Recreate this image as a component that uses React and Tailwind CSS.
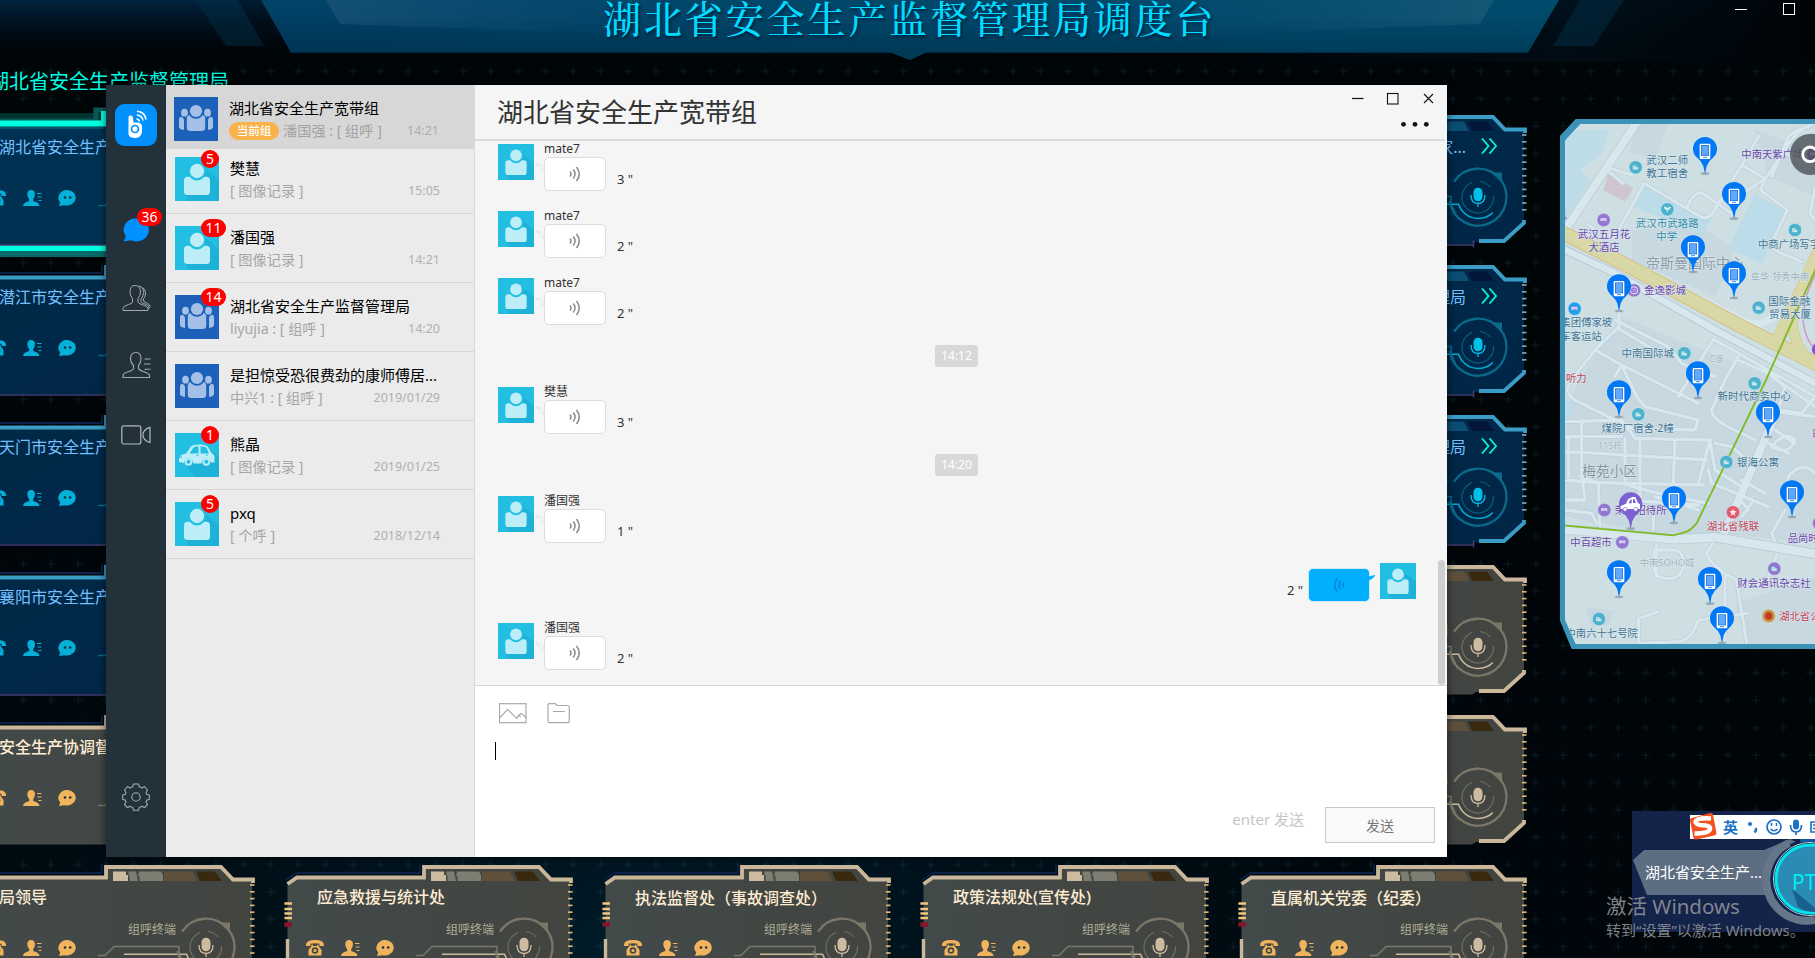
import React from 'react';

const CJK = "font-['Noto_Sans','Noto_Sans_CJK_SC',sans-serif]";

/* ---------- avatars ---------- */

function PersonAvatar({ className }) {
  return (
    <svg viewBox="0 0 44 44" className={className}>
      <rect width="44" height="44" fill="#22bfe3" />
      <path d="M28 10L44 23V44H14L10 38Z" fill="#1fb2d9" />
      <rect x="9" y="19.800" width="26" height="18.200" rx="3.500" fill="#bdedf7" />
      <ellipse cx="22" cy="14" rx="9" ry="9.500" fill="#22bfe3" />
      <ellipse cx="22" cy="14" rx="7.100" ry="7.200" fill="#bdedf7" />
    </svg>
  );
}

function GroupAvatar({ className }) {
  return (
    <svg viewBox="0 0 44 44" className={className}>
      <rect width="44" height="44" fill="#1c60b9" />
      <g fill="#a4c0e6">
        <ellipse cx="10.500" cy="15.700" rx="3.400" ry="3.900" />
        <ellipse cx="33.500" cy="15.700" rx="3.400" ry="3.900" />
        <path d="M5 23Q5 19.800 7.500 19.800Q10 21 10 23V33Q5 32.500 5 29.500Z" />
        <path d="M39 23Q39 19.800 36.500 19.800Q34 21 34 23V33Q39 32.500 39 29.500Z" />
        <rect x="12.800" y="18" width="18.400" height="16" rx="3.500" />
        <circle cx="22" cy="14" r="7.800" fill="#1c60b9" />
        <circle cx="22" cy="14" r="6.100" />
      </g>
    </svg>
  );
}

function CarAvatar({ className }) {
  return (
    <svg viewBox="0 0 44 44" className={className}>
      <rect width="44" height="44" fill="#22bfe3" />
      <path d="M36 17L44 24V44H20L9 30Z" fill="#1fb2d9" />
      <path d="M4 29V26Q4 21.500 11 20.500L16 13.500Q18 11.500 24 11.500Q31 11.500 33 14L36.500 20Q39.500 21 39.500 25V29.500H36Q34.500 25 31 25Q27.500 25 26.500 30.500H18.500Q17 25 13.500 25Q10 25 9 30Z" fill="#bdedf7" />
      <path d="M14.500 20.500L18.500 14.500Q20 13.300 23.500 13.300V20.500ZM25.500 13.300Q30 13.300 31.500 15L34 20.500H25.500Z" fill="#22bfe3" />
      <circle cx="13.500" cy="28.800" r="3.900" fill="#bdedf7" />
      <circle cx="31.300" cy="28.800" r="3.900" fill="#bdedf7" />
      <circle cx="13.500" cy="28.800" r="2" fill="#22bfe3" />
      <circle cx="31.300" cy="28.800" r="2" fill="#22bfe3" />
      <path d="M21.500 22.200h2M31 22.200h2M4 25l3-1.500" stroke="#22bfe3" strokeWidth="1" />
    </svg>
  );
}

/* ---------- dashboard ---------- */

const TONES = {
  gold: { line: '#cbb89b', body: 'url(#goldBody)', ring: '#7b7768', icon: '#f0b45c', mic: '#cdbb9f', tick: '#d9b679', b1: '#cdbb9f', b2: '#7d7d72', b3: '#5f503c', b4: '#38290f', arc: '#cbb79a' },
  blue: { line: '#3b9cc6', body: 'url(#blueBody)', ring: '#096a8a', icon: '#04b0d8', mic: '#00bfe6', tick: '#8ea0ab', b1: '#3b9cc6', b2: '#1a6389', b3: '#0b4e74', b4: '#03163a', arc: '#00a9cf' },
};

function CardFrame({ tone, selected }) {
  const t = TONES[tone];
  const ticks = Array.from({ length: 12 }, (_, i) => 20 + i * 6.8);
  return (
    <svg viewBox="0 0 286 150" className="absolute inset-0 h-[150px] w-[286px] overflow-visible" fill="none">
      <path d="M1.500 19L11 12H138V1.500H253L265 14H284V106L263 127H236L232 129.500H1.500Z" fill={selected ? '#003152' : t.body} />
      <path d="M0 15L11 8H134V0" stroke="#0c2048" strokeWidth="1.800" />
      {selected ? (
        <g>
          <rect x="0" y="-2" width="135" height="16" fill="#00ffe0" opacity="0.18" />
          <path d="M0 6H128V-5H138" stroke="#075a58" strokeWidth="5" />
          <path d="M0 8.500H136V-1H140" stroke="#00ffe2" strokeWidth="6" />
          <rect x="0" y="130" width="140" height="6" fill="#00ffe2" />
          <rect x="0" y="136" width="140" height="6" fill="#056b68" />
        </g>
      ) : (
        <path d="M1.500 19L11 12.500H138V2H253L265 14.500H285V18" stroke={t.line} strokeWidth="3.800" />
      )}
      <path d="M145 6.500H158V10H160V16H145Z" fill={t.b1} />
      <path d="M160.500 6.500H168L170 16H161.500V11L160.500 10Z" fill={t.b2} />
      <path d="M171 6.500H193L195 10V16H171.500V11H170Z" fill={t.b2} />
      <path d="M196 6.500H224L229 16H196Z" fill={t.b3} />
      <path d="M228 6.500H247L254 16H232Z" fill={t.b4} />
      {ticks.map((y) => (
        <path key={y} d={`M282 ${y}h4.500`} stroke={t.tick} strokeWidth="1.700" />
      ))}
      <path d="M284 105V108L264 126H239" stroke={t.line} strokeWidth="3.800" />
      {tone === 'blue' && <path d="M1 130H233.500M233.500 125.500V132.500" stroke="#403c70" strokeWidth="1.600" />}
      {tone === 'gold' && (
        <g>
          <path d="M-1.600 38.500H6M-1.600 44H6M-1.600 48.500H6M-1.600 53H6" stroke="#f0c680" strokeWidth="2.300" />
          <rect x="-1.600" y="57.300" width="7.600" height="4.500" fill="#86152b" />
          <path d="M1.500 74V125" stroke={t.line} strokeWidth="3.400" />
        </g>
      )}
      <path d="M130 90.500H137L146 81.500H211V88L216 100" stroke={t.ring} strokeWidth="1.500" />
      <path d="M156 89.300H218.500Q224 103 238 103.500Q248 103 252.800 97.500" stroke={t.arc} strokeWidth="1.600" />
      <path d="M214 66.700A28.500 28.500 0 1 1 209.700 86" stroke={t.ring} strokeWidth="2.300" />
      <path d="M251 57.500H262V67.500Z" fill={t.ring} />
      <path d="M232 67.500A15.800 15.800 0 1 0 253.500 81M240 66.500Q247 67.500 250 72" stroke={t.ring} strokeWidth="1.200" opacity="0.8" />
      <rect x="233.500" y="72.700" width="9" height="13.500" rx="4.500" fill={t.mic} />
      <path d="M231 80Q231 88.500 238 88.500Q245 88.500 245 80M238 88.500V92" stroke={t.mic} strokeWidth="1.300" />
    </svg>
  );
}

function PhoneIcon({ color }) {
  return (
    <svg viewBox="0 0 18 16" className="h-4 w-[18px]" fill={color}>
      <path d="M0 5Q0 0 9 0Q18 0 18 5V6H13.500V3.800Q9 2.800 4.500 3.800V6H0Z" />
      <path fillRule="evenodd" d="M5.500 4.800H7V6H11V4.800H12.500V6L15.500 10V15.500H2.500V10L5.500 6ZM9 7.200A3.300 3.300 0 1 0 9 13.800A3.300 3.300 0 1 0 9 7.200ZM9 8.900A1.600 1.600 0 1 1 9 12.100A1.600 1.600 0 1 1 9 8.900Z" />
    </svg>
  );
}

function UserIcon({ color }) {
  return (
    <svg viewBox="0 0 19 16" className="h-4 w-[19px]" fill={color}>
      <path d="M8 0Q12 0 12 4.500Q11.700 7.500 10.200 9.200V11Q16.500 12.500 16.500 16H0Q0 12.500 6.200 11V9.200Q4.500 7.500 4.300 4.500Q4.300 0 8 0Z" />
      <path d="M14 3.500H18.500M14.500 7H18.500M15.500 10.500H18.500" stroke={color} strokeWidth="1.200" />
    </svg>
  );
}

function TalkIcon({ color }) {
  return (
    <svg viewBox="0 0 19 16" className="h-4 w-[19px]">
      <path d="M9.800 0A9 7.800 0 1 1 6.500 15.300L1 16L2.200 12.500A9 7.800 0 0 1 9.800 0Z" fill={color} />
      <circle cx="7" cy="7.500" r="1.300" fill="#1d3038" />
      <circle cx="12.200" cy="7.500" r="1.300" fill="#1d3038" />
    </svg>
  );
}

/* Full-width brackets sit in the middle of their cell in the TC face. */
function CardTitle({ text }) {
  return text.split(/([（）])/).map((part, i) => (
    part === '（' || part === '）'
      ? <span key={i} className="font-['Noto_Sans_CJK_TC',sans-serif]">{part}</span>
      : part
  ));
}

function Card({ title, tone, selected, place, align }) {
  const icon = TONES[tone].icon;
  return (
    <div className={`relative h-[150px] w-[286px] ${place}`}>
      <CardFrame tone={tone} selected={selected} />
      <div className="relative flex h-full flex-col pt-[20px]">
        <div className={`flex h-6 items-center whitespace-nowrap pl-[31px] pr-[29px] text-[16px] leading-6 ${tone === 'gold' ? 'font-medium text-[#ffecd2]' : 'text-[#74c0ff]'} ${align === 'right' ? 'justify-end' : ''}`}>
          <span className={align === 'right' ? 'mr-[30px]' : ''}><CardTitle text={title} /></span>
          {align === 'right' && (
            <svg viewBox="0 0 16 16" className="-ml-[15px] -mt-[3px] h-4 w-4 shrink-0" fill="none" stroke="#0af5cf" strokeWidth="1.800">
              <path d="M1 0.500L7.500 8L1 15.500M8.500 0.500L15 8L8.500 15.500" />
            </svg>
          )}
        </div>
        <div className={`flex h-[31px] items-end justify-end pr-[78px] text-[12px] leading-[21px] ${tone === 'gold' ? 'text-[#b0ae98]' : 'text-[#0a7fa8]'}`}>{tone === 'gold' || align === 'right' ? '组呼终端' : ''}</div>
        <div className="flex gap-[16.500px] pl-[20px]">
          <PhoneIcon color={icon} />
          <UserIcon color={icon} />
          <TalkIcon color={icon} />
        </div>
      </div>
    </div>
  );
}

const CARDS = [
  { title: '湖北省安全生产监', tone: 'blue', selected: true, place: 'col-start-1 row-start-1' },
  { title: '潜江市安全生产监', tone: 'blue', place: 'col-start-1 row-start-2' },
  { title: '天门市安全生产监', tone: 'blue', place: 'col-start-1 row-start-3' },
  { title: '襄阳市安全生产监', tone: 'blue', place: 'col-start-1 row-start-4' },
  { title: '安全生产协调督察', tone: 'gold', place: 'col-start-1 row-start-5' },
  { title: '应急家...', tone: 'blue', align: 'right', place: 'col-start-5 row-start-1' },
  { title: '管理局', tone: 'blue', align: 'right', place: 'col-start-5 row-start-2' },
  { title: '管理局', tone: 'blue', align: 'right', place: 'col-start-5 row-start-3' },
  { title: '', tone: 'gold', place: 'col-start-5 row-start-4' },
  { title: '', tone: 'gold', place: 'col-start-5 row-start-5' },
  { title: '局领导', tone: 'gold', place: 'col-start-1 row-start-6' },
  { title: '应急救援与统计处', tone: 'gold', place: 'col-start-2 row-start-6' },
  { title: '执法监督处（事故调查处）', tone: 'gold', place: 'col-start-3 row-start-6' },
  { title: '政策法规处(宣传处)', tone: 'gold', place: 'col-start-4 row-start-6' },
  { title: '直属机关党委（纪委）', tone: 'gold', place: 'col-start-5 row-start-6' },
];

function Backdrop() {
  return (
    <svg viewBox="0 0 1815 958" className="absolute inset-0 h-[958px] w-[1815px]">
      <defs>
        <pattern id="plus" width="27.500" height="27.350" patternUnits="userSpaceOnUse" x="9.500" y="3">
          <path d="M13.750 9.500V17.700M9.600 13.600H17.900" stroke="#5b8494" strokeOpacity="0.18" strokeWidth="1" />
        </pattern>
        <linearGradient id="topGlow" x1="0" y1="0" x2="0" y2="1">
          <stop offset="0" stopColor="#012440" />
          <stop offset="1" stopColor="#000408" stopOpacity="0" />
        </linearGradient>
        <linearGradient id="topFade" x1="0" y1="0" x2="1" y2="0">
          <stop offset="0.500" stopColor="#000306" stopOpacity="0" />
          <stop offset="0.860" stopColor="#000d16" stopOpacity="0.800" />
          <stop offset="1" stopColor="#000306" />
        </linearGradient>
        <radialGradient id="lowGlow" cx="0.350" cy="1" r="0.700">
          <stop offset="0" stopColor="#001c2a" />
          <stop offset="1" stopColor="#00040a" stopOpacity="0" />
        </radialGradient>
        <linearGradient id="banner" x1="0" y1="1" x2="1" y2="0">
          <stop offset="0" stopColor="#003258" />
          <stop offset="0.500" stopColor="#004468" />
          <stop offset="1" stopColor="#004c6c" />
        </linearGradient>
        <linearGradient id="bannerShade" x1="0" y1="0" x2="0" y2="1">
          <stop offset="0.300" stopColor="#003850" stopOpacity="0" />
          <stop offset="1" stopColor="#003850" stopOpacity="0.800" />
        </linearGradient>
        <linearGradient id="shine" x1="0" y1="0" x2="1" y2="0">
          <stop offset="0" stopColor="#1c5478" />
          <stop offset="0.350" stopColor="#0a4a70" stopOpacity="0" />
          <stop offset="0.650" stopColor="#0a4a70" stopOpacity="0" />
          <stop offset="1" stopColor="#1b5d78" />
        </linearGradient>
        <linearGradient id="goldBody" x1="0" y1="0" x2="1" y2="0">
          <stop offset="0" stopColor="#424a4a" />
          <stop offset="1" stopColor="#42443f" />
        </linearGradient>
        <linearGradient id="blueBody" x1="0" y1="0" x2="1" y2="1">
          <stop offset="0" stopColor="#002a48" />
          <stop offset="1" stopColor="#012648" />
        </linearGradient>
      </defs>
      <rect width="1815" height="958" fill="#000508" />
      <rect width="1815" height="958" fill="url(#lowGlow)" />
      <rect width="1815" height="62" fill="url(#topGlow)" />
      <rect width="1815" height="62" fill="url(#topFade)" />
      <rect y="58" width="1815" height="900" fill="url(#plus)" />
      <path d="M195 0H238L264 46H226Z" fill="#02304a" opacity="0.450" />
      <path d="M1580 0H1624L1594 46H1553Z" fill="#01304a" opacity="0.500" />
      <path d="M238 0H261L291 52.500H268Z" fill="#000a12" opacity="0.300" />
      <path d="M261 0H1559L1528 52.500H926L910 60L891 52.500H291Z" fill="url(#banner)" />
      <path d="M326 0L340 24L640 34H1210L1480 24L1494 0Z" fill="url(#shine)" opacity="0.700" />
      <path d="M261 0H1559L1528 52.500H926L910 60L891 52.500H291Z" fill="url(#bannerShade)" />
    </svg>
  );
}

/* ---------- map ---------- */

const ROADS = [
  'M190 360L268 220L440 322Q462 328 476 305L612 78',
  'M398 290Q410 250 440 248L532 312L537 330',
  'M480 290L500 270M560 165L630 205M555 255L632 205L690 120Q720 60 780 40M650 200L700 80Q720 60 760 50M690 130L780 170',
  'M630 205L617 240L697 300L650 400Q650 420 680 430L740 455M780 235L765 310L780 330',
  'M165 175L230 195M155 180L205 220M100 345L150 380',
  'M192 605V650L120 720L65 790L40 830Q30 850 60 870L230 955L420 960L430 930L270 890L245 860L200 765L180 800',
  'M120 720L200 765L430 880M180 630L340 710L380 760L480 800M190 655L330 740M480 680L440 745L370 860M550 740L510 810L470 900Q470 930 540 960L600 990',
  'M550 750L640 790L780 890M480 690L780 860M640 790L690 830L670 900L740 910L780 860',
  'M30 935L200 930L240 985L465 990L430 1120M30 980H200M30 1025L130 1030L455 1050M30 1110L130 1118L445 1125M40 985V1100M80 940V1090L90 1170H30M210 985V1110M255 990V1180M360 990L355 1120',
  'M75 1100L130 1120L135 1260M200 1120L310 1150L460 1180M210 1170L430 1185M30 1200L110 1210L125 1240M295 1210V1260M300 1160L430 1200',
  'M465 990L480 1080L560 1130M480 1000L530 1010L600 1070M460 1080L470 1120L640 1190M560 1110L630 1150M550 1160L580 1200M590 1180L560 1220',
  'M640 1000L700 1030M660 960L720 1000M650 1010Q690 960 720 990Q700 1040 650 1010M630 900L780 920M700 1100Q740 1050 780 1090M700 1100L690 1160',
  'M305 1290V1400M305 1320H360Q390 1330 385 1370Q375 1410 340 1405Q295 1405 297 1370V1320',
  'M480 1290L455 1330Q455 1350 510 1390L545 1410L575 1600M510 1400V1590M575 1510L430 1530Q410 1590 370 1595L250 1600V1525L310 1505M690 1200L650 1270L670 1320L630 1430',
];

const LABELS = [
  [337, 163, '武汉二师', '#3f7393', 31.5], [337, 202, '教工宿舍', '#3f7393', 31.5],
  [652, 143, '中南天紫广场', '#6a45a8', 31], [337, 352, '武汉市武珞路', '#2f8aa4', 31.5], [335, 391, '中学', '#2f8aa4', 31],
  [147, 384, '武汉五月花', '#6a45a8', 31.5], [147, 423, '大酒店', '#6a45a8', 31],
  [702, 414, '中商广场写字', '#3f7393', 31], [420, 475, '帝斯曼国际中心', '#8c9ba3', 42],
  [675, 510, '阜华·领秀中南', '#9db0b9', 28], [330, 552, '金逸影城', '#6a45a8', 31.5],
  [703, 584, '国际金融', '#3f7393', 31.5], [705, 624, '贸易大厦', '#3f7393', 31.5],
  [94, 649, '集团傅家坡', '#3f7393', 31], [78, 689, '车客运站', '#3f7393', 31],
  [278, 741, '中南国际城', '#3f7393', 31.5], [485, 755, 'C座', '#a3b3bb', 26],
  [64, 817, '听力', '#c23f52', 31], [598, 871, '新时代商务中心', '#3f7393', 31.5],
  [248, 966, '煤院厂宿舍-2幢', '#3f7393', 31.5], [166, 1017, '115栋', '#a3b3bb', 27],
  [164, 1097, '梅苑小区', '#84939b', 41], [609, 1067, '银海公寓', '#3f7393', 31.5],
  [257, 1211, '荣军招待所', '#6a45a8', 31], [534, 1261, '湖北省残联', '#c23f52', 31.5],
  [108, 1308, '中百超市', '#6a45a8', 31], [760, 1296, '品尚时代', '#6a45a8', 31],
  [336, 1367, '中南SOHO城', '#a3b3bb', 28], [657, 1430, '财会通讯杂志社', '#6a45a8', 31.5],
  [750, 1531, '湖北省公安', '#c23f52', 31], [140, 1580, '中南六十七号院', '#3f7393', 31],
  [788, 981, '邮', '#6a45a8', 31], [25, 330, '斗', '#6a45a8', 26],
];

const POIS = [
  [242, 172, '#4db3cc', 'b'], [337, 298, '#4db3cc', 't'], [146, 330, '#9277d0', 'h'], [720, 360, '#4db3cc', 'b'],
  [237, 541, '#9277d0', 'f'], [611, 593, '#4db3cc', 'b'], [59, 596, '#1da1ee', 'h'], [388, 730, '#4db3cc', 'b'],
  [599, 820, '#4db3cc', 'b'], [250, 913, '#4db3cc', 'b'], [514, 1056, '#4db3cc', 'b'], [148, 1200, '#9277d0', 'h'],
  [534, 1207, '#e05c6b', 's'], [202, 1297, '#9277d0', 'h'], [658, 1376, '#9277d0', 'b'], [641, 1518, '#c3963a', 'r'],
  [132, 1527, '#4db3cc', 'b'], [792, 1240, '#9277d0', 'h'], [790, 718, '#7a4fd0', 'h'], [775, 133, '#6a45a8', 'h'],
];

const PINS = [
  [450, 190], [537, 325], [414, 485], [537, 563], [192, 602], [429, 863], [192, 920],
  [639, 980], [711, 1220], [357, 1238], [192, 1460], [465, 1480], [501, 1598],
];

const POI_GLYPHS = {
  b: <path d="M-9 7V-6H2V-1H8V7ZM-6 -2H-1M-6 2H-1M4 3H6" fill="#dff0f5" stroke="#4db3cc" strokeWidth="1.500" />,
  t: <path d="M0 9V0M0 1Q-8 1 -9 -7Q0 -7 0 0Q1 -7 9 -6Q8 2 0 1" fill="#dff0f5" stroke="#dff0f5" strokeWidth="2.500" />,
  h: <path d="M-10 6V-6H9V6H7V3H-8V6ZM-5 -1H5" fill="#ede6fb" stroke="#9277d0" strokeWidth="1.500" />,
  f: <g fill="none" stroke="#ede6fb" strokeWidth="3"><circle r="11" /><circle r="4" strokeDasharray="3 3" /></g>,
  s: <path d="M0 -11L3 -4L11 -3L5 3L7 10L0 6L-7 10L-5 3L-11 -3L-3 -4Z" fill="#fdeaea" />,
  r: <circle r="13" fill="#c0392f" stroke="#e0b85a" strokeWidth="2" />,
};

function MapPanel() {
  return (
    <svg viewBox="15 27 765 1590" className="absolute left-[1560px] top-[119px] h-[530px] w-[255px]">
      <defs>
        <clipPath id="mapClip">
          <path d="M30 92L76 42H800V1602H62L30 1530Z" />
        </clipPath>
      </defs>
      <path d="M15 77L62 27H800V1617H50L15 1532Z" fill="#3a92b7" />
      <g clipPath="url(#mapClip)">
        <rect x="15" y="27" width="800" height="1600" fill="#cedfe4" />
        <path d="M245 42H340L300 150L225 125ZM230 360L440 350L540 420L480 560L230 450ZM600 60L780 120V260L640 200ZM200 620L640 800L780 900V1300L480 1270L300 1270L30 1220V900L100 760Z" fill="#c7d8e1" />
        <path d="M30 60H165L140 130L75 180L105 215L30 330Z" fill="#bedce8" />
        <path d="M265 225L410 300L470 325L440 375L235 290ZM600 250L690 305L620 460L520 415ZM30 865L60 885L40 930H30Z" fill="#bbdce8" />
        <path d="M160 190L235 235L210 275L145 240Z" fill="#d0c6d1" />
        <path d="M90 1490L180 1505L160 1545L110 1550ZM540 1480L780 1400V1617H580Z" fill="#c7d8e1" />
        <g fill="none" strokeLinejoin="round" strokeLinecap="round">
          <path d="M250 30L40 345M655 930L505 1275" stroke="#b4c6cf" strokeWidth="28" />
          {ROADS.map((d) => <path key={d} d={d} stroke="#b7c9d2" strokeWidth="13" />)}
          {ROADS.map((d) => <path key={d} d={d} stroke="#d8e7ee" strokeWidth="10" />)}
          <path d="M250 30L40 345M655 930L505 1275" stroke="#d8e7ee" strokeWidth="24" />
          <path d="M20 415L180 490L480 660L800 830" stroke="#b4c6cf" strokeWidth="25" />
          <path d="M20 415L180 490L480 660L800 830M150 430L545 620Q570 645 620 640L660 620" stroke="#d8e7ee" strokeWidth="20" />
          <path d="M20 1257L360 1288L480 1282L800 1335" stroke="#b4c6cf" strokeWidth="30" />
          <path d="M20 1257L360 1288L480 1282L800 1335" stroke="#d8e7ee" strokeWidth="26" />
          <path d="M20 367L200 458L560 650L800 770" stroke="#d9b878" strokeWidth="43" />
          <path d="M800 395L740 530L665 690M712 600Q705 690 760 750" stroke="#d9c98c" strokeWidth="32" />
          <path d="M20 367L200 458L560 650L800 770" stroke="#d8d8a6" strokeWidth="38" />
          <path d="M800 395L740 530L665 690M712 600Q705 690 760 750" stroke="#d8d8a6" strokeWidth="27" />
          <path d="M785 485Q740 570 745 640Q755 700 785 720" stroke="#d58fc2" strokeWidth="4" />
          <path d="M790 460L633 810L513 1058L425 1240Q410 1258 395 1265L355 1276L20 1246" stroke="#7fbb25" strokeWidth="5.500" />
        </g>
        {POIS.map(([x, y, c, k]) => (
          <g key={`${x}-${y}`} transform={`translate(${x} ${y})`}>
            <circle r="20" fill={c} stroke="#dfeaf0" strokeWidth="1.500" />
            {POI_GLYPHS[k]}
          </g>
        ))}
        <g className={CJK} textAnchor="middle" stroke="#dce9ee" strokeWidth="3" paintOrder="stroke">
          {LABELS.map(([x, y, s, c, z]) => (
            <text key={s + x} x={x} y={y} fill={c} fontSize={z}>{s}</text>
          ))}
        </g>
        {PINS.map(([x, y]) => (
          <g key={`${x}-${y}`} transform={`translate(${x} ${y})`}>
            <ellipse cy="1" rx="13" ry="4" fill="#7e8b92" opacity="0.600" />
            <path d="M0 2L-5 -22Q-10 -36 -25 -48Q-36 -58 -36 -73A36 36 0 0 1 36 -73Q36 -58 25 -48Q10 -36 5 -22Z" fill="#0078f5" />
            <rect x="-16" y="-89" width="32" height="46" rx="3" fill="#fff" />
            <rect x="-12" y="-85" width="24" height="33" fill="#1f6dd6" />
            <rect x="-10" y="-83" width="20" height="29" fill="#62a9fa" />
            <path d="M-6 -48H6" stroke="#3f8fee" strokeWidth="3" />
          </g>
        ))}
        <g transform="translate(227 1255)">
          <ellipse cy="1" rx="13" ry="4" fill="#7e8b92" opacity="0.600" />
          <path d="M0 2L-5 -22Q-10 -36 -25 -48Q-35 -58 -35 -73A35 35 0 0 1 35 -73Q35 -58 25 -48Q10 -36 5 -22Z" fill="#7b62d2" />
          <path d="M-30 -58V-67L-14 -74L-8 -87L4 -94H14L22 -76L28 -72V-58Z" fill="#fff" />
          <path d="M-6 -75L-2 -84L3 -87V-75ZM7 -88H11L16 -76H7Z" fill="#7b62d2" />
          <circle cx="-17" cy="-57" r="6" fill="#fff" stroke="#7b62d2" strokeWidth="2" />
          <circle cx="15" cy="-57" r="6" fill="#fff" stroke="#7b62d2" strokeWidth="2" />
        </g>
        <circle cx="767" cy="133" r="62" fill="#4d545a" opacity="0.820" />
        <circle cx="765" cy="133" r="22" fill="none" stroke="#fff" strokeWidth="8.500" />
      </g>
    </svg>
  );
}

/* ---------- floating talk widget ---------- */

function TalkWidget() {
  return (
    <div className="absolute left-[1632px] top-[811px] h-[121px] w-[183px] overflow-hidden bg-[#14234a]">
      <svg viewBox="0 0 183 121" className="absolute inset-0 h-[121px] w-[183px]">
        <path d="M1 49L12 39H132L158 28L183 40V84H15Z" fill="#5e6e82" />
        <circle cx="178" cy="68" r="40" fill="#14234a" />
        <path d="M157 32A41 41 0 0 0 183 109" fill="none" stroke="#66768a" strokeWidth="8" />
        <path d="M168 29H183" stroke="#15579a" strokeWidth="4" />
        <circle cx="178" cy="68" r="36.500" fill="#051c38" stroke="#b9d7e4" strokeWidth="1" />
        <circle cx="178" cy="68" r="34" fill="#2a8bb4" stroke="#00e5ee" strokeWidth="3" />
        <path d="M160 78L183 97V101Q174 101 166 96Z" fill="#17618c" />
      </svg>
      <div className="absolute left-[13px] top-[49px] h-6 whitespace-nowrap text-[15px] leading-6 text-white">湖北省安全生产...</div>
      <div className="absolute left-[160px] top-[57px] whitespace-nowrap text-[21px] leading-[28px] text-[#00edf2]">PTT</div>
      <div className="absolute left-[58px] top-[4px] flex h-6 w-[125px] items-center overflow-hidden bg-white pl-[33px]">
        <span className="w-[23px] shrink-0 text-[15px] font-bold leading-6 text-[#1b72c6]">英</span>
        <svg viewBox="0 0 88 24" className="h-6 w-[88px] shrink-0" fill="none" stroke="#1b72c6" strokeWidth="1.700">
          <circle cx="4" cy="9" r="2" fill="#1b72c6" stroke="none" />
          <path d="M9.500 13Q11 15 8.500 17.500" strokeWidth="2.400" />
          <circle cx="28" cy="12" r="7" />
          <path d="M25.500 8V11M30.500 8V11M24.500 14Q28 17.500 31.500 14" strokeWidth="1.500" />
          <rect x="47" y="4.500" width="6" height="10" rx="3" fill="#1b72c6" stroke="none" />
          <path d="M44.500 10Q44.500 17 50 17Q55.500 17 55.500 10M50 17V20" />
          <path d="M65 7H80V17H65ZM67 10H78M67 13.500H78M70 7V17" />
        </svg>
      </div>
      <svg viewBox="0 0 28 28" className="absolute left-[57px] top-px h-7 w-7">
        <path d="M3 6Q0.500 6.300 1 8.500L4.500 26Q5.200 28 7.500 27.500L25 23.500Q28 22.500 27.300 20L24 2.500Q23.500 0.500 21 1Z" fill="#f4511e" />
        <path d="M22 6.500Q7 5.500 6.500 10Q7 13 14 13.300Q21.500 13.500 21 17Q20 21.500 5.500 21.500" fill="none" stroke="#fff" strokeWidth="4.500" />
      </svg>
    </div>
  );
}

/* ---------- messenger ---------- */

function Badge({ n, className }) {
  return (
    <span className={`absolute flex h-[18px] items-center justify-center rounded-full bg-[#fe0000] text-[14px] leading-none text-white ${className}`}>{n}</span>
  );
}

function SideNav() {
  return (
    <nav className="flex w-[60px] shrink-0 flex-col items-center bg-[#22313a] pt-[19px]">
      <svg viewBox="0 0 42 42" className="h-[42px] w-[42px]">
        <rect width="42" height="42" rx="9.500" fill="#0091ff" />
        <path d="M13.500 13Q13.500 11.500 15.500 11.500Q17.500 11.500 17.800 13L18.500 18.500H22.500Q27.500 19 27 24Q27.500 28 26 31Q24 34 20.500 34Q13.500 34 13.500 30Z" fill="#fff" />
        <circle cx="20" cy="25" r="3.500" fill="#fff" stroke="#0091ff" strokeWidth="1.700" />
        <path d="M21.500 15Q24 15.200 24.500 17.500M21.800 11Q27.300 11.500 28 16.500M22 7.300Q30 8 31 15.500" stroke="#fff" strokeWidth="1.600" fill="none" />
      </svg>
      <div className="relative mt-[72px] h-6 w-[26px]">
        <svg viewBox="0 0 26 24" className="h-6 w-[26px]">
          <path d="M13.300 0.500A12 11.500 0 1 1 8.500 22.300L0.500 23.500L2.800 18.500A12 11.500 0 0 1 13.300 0.500Z" fill="#0091ff" />
        </svg>
        <Badge n="36" className="-top-[10px] left-[14px] w-[25px]" />
      </div>
      <svg viewBox="0 0 29 28" className="mt-[42px] h-7 w-[29px]" fill="none" stroke="#a3abaf" strokeWidth="1">
        <path d="M13 1.500Q18.500 1.500 18.500 8Q18.500 11.500 16 14.500V18Q16 19.500 20 20.500Q26 22.500 26 24.500V26.500H1V24.500Q1 22 6.500 20.500Q10.500 19.500 10.500 18V14.500Q8 11.500 8 8Q8 1.500 13 1.500Z" />
        <path d="M17 2Q21.500 3 21.500 8.500Q21.500 12 19 15V17.500Q19.500 19 23 20Q27.500 21.500 27.500 24H26M20.500 3.500Q23.500 5 23.500 9Q23.500 12.500 21.500 15V17L25.500 19.500Q28.500 21 28.300 22.500" />
      </svg>
      <svg viewBox="0 0 29 28" className="mt-[39px] h-7 w-[29px]" fill="none" stroke="#a3abaf" strokeWidth="1.100">
        <path d="M14 1.500Q19 1.500 19 8Q19 11.500 16.500 14.500V17.500Q17 19 21 20.500Q27.500 22.500 27.500 24.500V26.500H1V24.500Q1 22 7 20.500Q11.500 19 11.500 17.500V14.500Q8.500 11.500 8.500 8Q8.500 1.500 14 1.500Z" />
        <path d="M22.500 8H28.500M22 13H28.500M22.500 18.300H28.500" />
      </svg>
      <svg viewBox="0 0 30 20" className="mt-[46px] h-5 w-[30px]" fill="none" stroke="#b3babd" strokeWidth="1.200">
        <rect x="0.800" y="0.800" width="19" height="18.200" rx="2" />
        <path d="M29 2.300V17.500Q24 16.500 22 11.500V8.300Q24 3.500 29 2.300Z" />
      </svg>
      <svg viewBox="0 0 28 28" className="mt-[338px] h-7 w-7" fill="none" stroke="#a3abaf" strokeWidth="1.100" strokeLinejoin="round">
        <path d="M11.500 1H16.500L17.300 3.800L20 5L22.500 3.500L25.500 7L24 9.500L24.800 11.500L27.300 12V16.500L24.800 17L24 19L25.500 21.500L22.500 24.700L20 23.300L17.300 24.400L16.500 27.300H11.500L10.700 24.400L8 23.300L5.500 24.700L2.500 21.500L4 19L3.200 17L0.700 16.500V12L3.200 11.500L4 9.500L2.500 7L5.500 3.500L8 5L10.700 3.800Z" />
        <circle cx="14" cy="14" r="4.200" />
      </svg>
    </nav>
  );
}

const CHATS = [
  { name: '樊慧', note: '[ 图像记录 ]', time: '15:05', badge: '5', kind: 'person' },
  { name: '潘国强', note: '[ 图像记录 ]', time: '14:21', badge: '11', kind: 'person' },
  { name: '湖北省安全生产监督管理局', note: 'liyujia : [ 组呼 ]', time: '14:20', badge: '14', kind: 'group' },
  { name: '是担惊受恐很费劲的康师傅居...', note: '中兴1 : [ 组呼 ]', time: '2019/01/29', kind: 'group' },
  { name: '熊晶', note: '[ 图像记录 ]', time: '2019/01/25', badge: '1', kind: 'car' },
  { name: 'pxq', note: '[ 个呼 ]', time: '2018/12/14', badge: '5', kind: 'person' },
];

function ChatRow({ item, first }) {
  const Avatar = item.kind === 'person' ? PersonAvatar : item.kind === 'car' ? CarAvatar : GroupAvatar;
  return (
    <div className={`flex border-b border-[#d8d8d8] pl-[9px] ${first ? 'h-[65px] pt-2' : 'h-[69px] pt-3'}`}>
      <div className="relative h-11 w-11 shrink-0">
        <Avatar className="h-11 w-11" />
        {item.badge && <Badge n={item.badge} className={`-top-[7px] left-[26px] ${item.badge.length > 1 ? 'w-[25px]' : 'w-[18px]'}`} />}
      </div>
      <div className="-mt-px ml-[11px] w-[210px]">
        <div className="whitespace-nowrap text-[15px] leading-6 text-black">{item.name}</div>
        <div className="flex items-center justify-between text-[14.200px] leading-5 text-[#a6a6a6]">
          <span className="whitespace-pre">{item.note}</span>
          <span className="mt-px text-[12.500px] text-[#b0b0b0]">{item.time}</span>
        </div>
      </div>
    </div>
  );
}

function ChatList() {
  return (
    <div className="w-[309px] shrink-0 border-r border-[#d8d8d8] bg-[#ebebeb]">
      <div className="flex h-16 bg-[#d7d7d7] pl-2 pt-3">
        <GroupAvatar className="h-11 w-11 shrink-0" />
        <div className="-mt-px ml-[11px] w-[210px]">
          <div className="text-[15px] leading-6 text-black">湖北省安全生产宽带组</div>
          <div className="flex items-center text-[14.200px] leading-5 text-[#a3a3a3]">
            <span className="flex h-[18px] w-[50px] items-center justify-center rounded-full bg-[#f9b24c] text-[11.500px] font-medium text-white">当前组</span>
            <span className="ml-[4px] flex-1 whitespace-pre">潘国强 : [ 组呼 ]</span>
            <span className="mt-px text-[12.500px] text-[#adadad]">14:21</span>
          </div>
        </div>
      </div>
      {CHATS.map((c, i) => <ChatRow key={c.name} item={c} first={i === 0} />)}
    </div>
  );
}

function VoiceGlyph({ className, color }) {
  return (
    <svg viewBox="0 0 12 16" className={`h-4 w-3 ${className}`} fill="none" stroke={color} strokeWidth="1.600">
      <path d="M1 5.500Q3 8 1 10.500M4.200 3.500Q7.800 8 4.200 12.500M7.500 1Q13 8 7.500 15" />
    </svg>
  );
}

function Incoming({ name, secs }) {
  return (
    <div className="flex h-[67px] shrink-0 items-start">
      <PersonAvatar className="h-9 w-9 shrink-0" />
      <div className="relative ml-[10px]">
        <div className="flex h-[13px] items-center whitespace-nowrap text-[12px] leading-none text-[#333]"><span className="-mt-[3px]">{name}</span></div>
        <div className="flex h-[34px] w-[62px] items-center justify-center rounded-[5px] border border-[#dcdcdc] bg-white">
          <VoiceGlyph className="" color="#8f8f8f" />
        </div>
        <svg viewBox="0 0 10 10" className="absolute -left-[8px] top-[19px] h-[10px] w-[10px]">
          <path d="M9 9L6 3.500L0.500 0.800Q3 5.500 9 9.500" fill="#fff" stroke="#dcdcdc" strokeWidth="0.900" />
        </svg>
      </div>
      <div className="ml-[11px] mt-[25px] whitespace-pre text-[13px] leading-5 text-[#333]">{secs} "</div>
    </div>
  );
}

function TimeChip({ children }) {
  return (
    <div className="flex h-[42px] shrink-0 justify-center pl-[2px] pr-[25px]">
      <span className="flex h-[22px] w-[43px] items-center justify-center rounded-[3px] bg-[#d8d8d8] text-[12px] text-white">{children}</span>
    </div>
  );
}

function Conversation() {
  return (
    <div className="flex flex-1 flex-col bg-[#f5f5f5]">
      <header className="relative mr-[2px] flex h-14 items-center border-b-2 border-[#dcdcdc] pl-[22px]">
        <h1 className="text-[26px] leading-8 text-[#333]">湖北省安全生产宽带组</h1>
        <svg viewBox="0 0 100 50" className="absolute right-[4px] top-[4px] h-[50px] w-[100px]" fill="none" stroke="#111">
          <path d="M11 9.500H22.500" strokeWidth="1.200" />
          <rect x="46.500" y="4.500" width="10.500" height="10.500" strokeWidth="1.100" />
          <path d="M83 5L92 14M92 5L83 14" strokeWidth="1.100" />
          <g fill="#111" stroke="none">
            <circle cx="62.500" cy="35.300" r="2.400" /><circle cx="74" cy="35.300" r="2.400" /><circle cx="85.300" cy="35.300" r="2.400" />
          </g>
        </svg>
      </header>
      <div className="flex h-[545px] overflow-hidden border-b border-[#d8d8d8]">
        <div className="flex flex-1 flex-col pl-[23px] pt-[3px]">
          <Incoming name="mate7" secs="3" />
          <Incoming name="mate7" secs="2" />
          <Incoming name="mate7" secs="2" />
          <TimeChip>14:12</TimeChip>
          <Incoming name="樊慧" secs="3" />
          <TimeChip>14:20</TimeChip>
          <Incoming name="潘国强" secs="1" />
          <div className="flex h-[60px] shrink-0 items-start justify-end pr-[22px]">
            <div className="mr-[5px] mt-[17px] whitespace-pre text-[13px] leading-5 text-[#333]">2 "</div>
            <div className="relative mr-[10px] mt-[5px] flex h-[34px] w-[62px] items-center justify-center rounded-[5px] border border-[#d3e9f2] bg-[#00b0ff]">
              <VoiceGlyph className="-scale-x-100" color="#0a86d6" />
              <svg viewBox="0 0 8 8" className="absolute -right-[7px] top-[5px] h-2 w-2">
                <path d="M0 3Q3 1.500 7.500 1Q5.500 4.500 0 7Z" fill="#00b0ff" />
              </svg>
            </div>
            <PersonAvatar className="h-9 w-9 shrink-0" />
          </div>
          <Incoming name="潘国强" secs="2" />
        </div>
        <div className="mr-[2px] flex w-[7px] flex-col justify-end">
          <div className="h-[125px] rounded-full bg-[#cecece]" />
        </div>
      </div>
      <div className="flex flex-1 flex-col bg-white pb-[14px] pl-[20px] pr-[12px] pt-[17px]">
        <div className="flex gap-[20px] pl-[4px]">
          <svg viewBox="0 0 28 21" className="h-[21px] w-7" fill="none" stroke="#a8a8a8">
            <rect x="0.500" y="0.700" width="26.500" height="19" strokeWidth="1.200" />
            <path d="M1 14.500L8.500 6.500L18 15.500L19.500 12L21 13.500V11Q22.500 9 27 15" strokeWidth="1.100" />
          </svg>
          <svg viewBox="0 0 23 21" className="h-[21px] w-[23px]" fill="none" stroke="#a8a8a8" strokeWidth="1.200">
            <path d="M1 2Q1 0.700 2.500 0.700H8L10.500 2.500H21Q22.300 2.500 22.300 4V18Q22.300 19.700 21 19.700H2.500Q1 19.700 1 18ZM6 8.500H18" />
          </svg>
        </div>
        <div className="mt-[18px] h-[18px] w-px bg-black" />
        <div className="mt-auto flex items-start justify-end">
          <span className="mr-[21px] text-[15px] leading-6 text-[#c6c6c6]">enter 发送</span>
          <button className="h-9 w-[110px] border border-[#c8c8c8] bg-[#fafafa] text-[14px] text-[#777]">发送</button>
        </div>
      </div>
    </div>
  );
}

export default function App() {
  return (
    <div className={`relative h-[958px] w-[1815px] overflow-hidden bg-[#000508] ${CJK}`}>
      <Backdrop />
      <div className="absolute left-[603px] top-[-11px] whitespace-nowrap font-['Noto_Serif_CJK_SC','Noto_Sans_CJK_SC',serif] text-[38px] font-medium leading-[56px] tracking-[2.900px] text-[#00dcff] [text-shadow:1px_2px_3px_rgba(0,20,50,0.8)]">湖北省安全生产监督管理局调度台</div>
      <svg viewBox="0 0 80 20" className="absolute left-[1735px] top-0 h-5 w-20" fill="none" stroke="#fff" strokeWidth="1">
        <path d="M0 9.500H12" /><rect x="48.500" y="3.500" width="11" height="11" />
      </svg>
      <div className="absolute left-[-11px] top-[67px] whitespace-nowrap text-[20px] leading-[30px] text-[#00ffe4]">湖北省安全生产监督管理局</div>
      <div className="absolute left-[-32px] top-[115px] grid auto-rows-[150px] grid-cols-[repeat(5,286px)] gap-x-8">
        {CARDS.map((c) => <Card key={c.place} {...c} />)}
      </div>
      <MapPanel />
      <TalkWidget />
      <div className="absolute left-[1606px] top-[893px] whitespace-nowrap text-[#8d9096] opacity-90">
        <div className="text-[20.500px] leading-[27px]">激活 Windows</div>
        <div className="text-[15px] leading-[21px]">转到“设置”以激活 Windows。</div>
      </div>
      <main className="absolute left-[106px] top-[85px] flex h-[772px] w-[1341px] shadow-[0_0_8px_rgba(0,0,0,0.6)]">
        <SideNav />
        <ChatList />
        <Conversation />
      </main>
    </div>
  );
}
